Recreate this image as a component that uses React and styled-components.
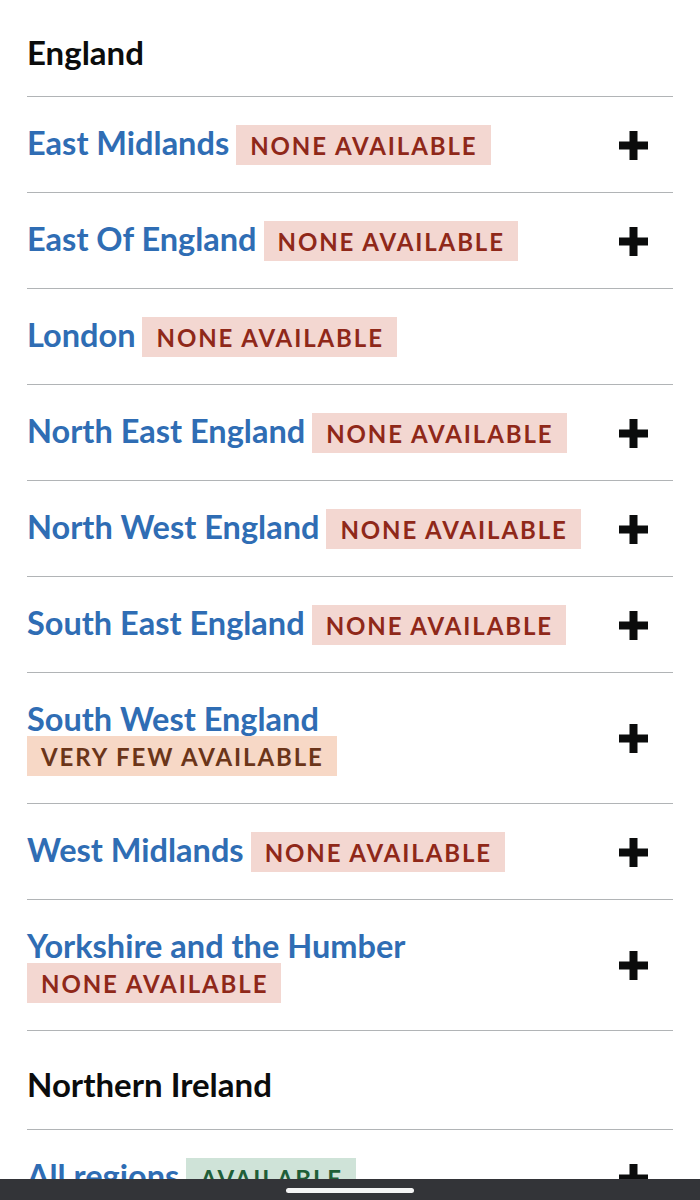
import React from "react";
import styled, { createGlobalStyle, css } from "styled-components";

const GlobalStyle = createGlobalStyle`
  html, body {
    margin: 0;
    padding: 0;
    background: #ffffff;
  }
  body {
    font-family: Lato, "Noto Sans", "Liberation Sans", sans-serif;
    color: #0b0c0c;
    -webkit-font-smoothing: antialiased;
  }
`;

const Page = styled.main`
  padding: 0 27px 40px;
`;

const SectionHeading = styled.h2`
  margin: 0;
  font-size: 33px;
  line-height: 32px;
  font-weight: 700;
  color: #0b0c0c;
  border-bottom: 1px solid #b1b4b6;
  padding: ${(p) => (p.$first ? "36px 0 28px" : "37px 0 29px")};
`;

const RegionList = styled.ul`
  list-style: none;
  margin: 0;
  padding: 0;
`;

const RegionRow = styled.li`
  display: flex;
  align-items: center;
  padding: 28px 25px 27px 0;
  border-bottom: 1px solid #b1b4b6;
`;

const RegionLabel = styled.div`
  flex: 1;
  display: flex;
  ${(p) =>
    p.$stacked
      ? css`
          flex-direction: column;
          align-items: flex-start;
        `
      : css`
          flex-direction: row;
          align-items: center;
          gap: 7px;
        `}
`;

const RegionLink = styled.a`
  font-size: 32.5px;
  line-height: ${(p) => (p.$stacked ? "35px" : "36px")};
  font-weight: 700;
  color: #2f6db4;
  text-decoration: none;
  white-space: nowrap;
  padding-bottom: ${(p) => (p.$stacked ? "0" : "4px")};
`;

const tones = {
  red: { bg: "#f3d7d1", fg: "#8f2819" },
  orange: { bg: "#f7d8c6", fg: "#6b3519" },
  green: { bg: "#cfe3d8", fg: "#1f5f38" },
};

const Tag = styled.strong`
  display: inline-block;
  height: 40px;
  line-height: 41px;
  padding: 0 13px 0 14px;
  font-size: 24px;
  font-weight: 700;
  letter-spacing: 1.9px;
  text-transform: uppercase;
  white-space: nowrap;
  background: ${(p) => tones[p.$tone].bg};
  color: ${(p) => tones[p.$tone].fg};
`;

const PlusWrap = styled.span`
  flex: none;
  width: 29px;
  height: 29px;
  display: flex;
`;

const NavBar = styled.div`
  position: fixed;
  left: 0;
  right: 0;
  bottom: 0;
  height: 21px;
  background: #333438;
  display: flex;
  align-items: center;
  justify-content: center;
`;

const NavHandle = styled.span`
  width: 128px;
  height: 5px;
  border-radius: 3px;
  background: #f4f4f4;
  margin-top: 2px;
`;

const Plus = () => (
  <PlusWrap aria-hidden="true">
    <svg width="29" height="29" viewBox="0 0 29 29">
      <rect x="0" y="10.5" width="29" height="8" fill="#0b0c0c" />
      <rect x="10.5" y="0" width="8" height="29" fill="#0b0c0c" />
    </svg>
  </PlusWrap>
);

const england = [
  { name: "East Midlands", status: "None available", tone: "red", expand: true },
  { name: "East Of England", status: "None available", tone: "red", expand: true },
  { name: "London", status: "None available", tone: "red", expand: false },
  { name: "North East England", status: "None available", tone: "red", expand: true },
  { name: "North West England", status: "None available", tone: "red", expand: true },
  { name: "South East England", status: "None available", tone: "red", expand: true },
  { name: "South West England", status: "Very few available", tone: "orange", expand: true, stacked: true },
  { name: "West Midlands", status: "None available", tone: "red", expand: true },
  { name: "Yorkshire and the Humber", status: "None available", tone: "red", expand: true, stacked: true },
];

const northernIreland = [
  { name: "All regions", status: "Available", tone: "green", expand: true },
];

const Region = ({ r }) => (
  <RegionRow>
    <RegionLabel $stacked={r.stacked}>
      <RegionLink href="#" $stacked={r.stacked}>
        {r.name}
      </RegionLink>
      <Tag $tone={r.tone}>{r.status}</Tag>
    </RegionLabel>
    {r.expand && <Plus />}
  </RegionRow>
);

export default function App() {
  return (
    <>
      <GlobalStyle />
      <Page>
        <SectionHeading $first>England</SectionHeading>
        <RegionList>
          {england.map((r) => (
            <Region key={r.name} r={r} />
          ))}
        </RegionList>
        <SectionHeading>Northern Ireland</SectionHeading>
        <RegionList>
          {northernIreland.map((r) => (
            <Region key={r.name} r={r} />
          ))}
        </RegionList>
      </Page>
      <NavBar>
        <NavHandle />
      </NavBar>
    </>
  );
}
